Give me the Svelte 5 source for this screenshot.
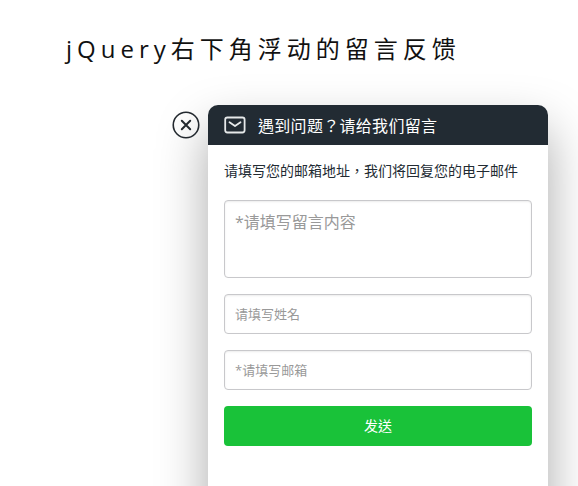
<script>
    let message = "";
    let name = "";
    let email = "";
</script>

<div class="page">
    <h1 class="title">jQuery右下角浮动的留言反馈</h1>

    <section class="panel">
        <button class="close" aria-label="关闭">
            <svg width="28" height="28" viewBox="0 0 28 28" fill="none" stroke="#23292f">
                <circle cx="14" cy="14" r="12.75" stroke-width="1.6" />
                <path d="M9.8 9.8 18.2 18.2M18.2 9.8 9.8 18.2" stroke-width="2" stroke-linecap="round" />
            </svg>
        </button>

        <header class="panel-head">
            <svg width="22" height="18" viewBox="0 0 22 18" fill="none" stroke="#e6e9ea" stroke-width="1.8">
                <rect x="1.2" y="1.5" width="19.4" height="15" rx="2.2" />
                <path d="M5.5 6.2 11 10 16.5 6.2" stroke-linecap="round" stroke-linejoin="round" />
            </svg>
            <span>遇到问题？请给我们留言</span>
        </header>

        <form class="panel-body" on:submit|preventDefault>
            <p class="hint">请填写您的邮箱地址，我们将回复您的电子邮件</p>
            <textarea class="field area" placeholder="*请填写留言内容" bind:value={message}></textarea>
            <input class="field" placeholder="请填写姓名" bind:value={name} />
            <input class="field" placeholder="*请填写邮箱" bind:value={email} />
            <button class="send" type="submit">发送</button>
        </form>
    </section>
</div>

<style>
    :global(body) {
        margin: 0;
        background: #fff;
        overflow: hidden;
        font-family: "Open Sans", "Noto Sans CJK TC", sans-serif;
    }

    .page {
        height: 486px;
        overflow: hidden;
        padding-left: 66px;
        box-sizing: border-box;
    }

    .title {
        margin: 0;
        padding-top: 33px;
        height: 105px;
        box-sizing: border-box;
        font-size: 24px;
        line-height: 32px;
        font-weight: 400;
        letter-spacing: 5px;
        color: #111;
    }

    .panel {
        position: relative;
        width: 340px;
        height: 420px;
        margin-left: 142px;
        border-radius: 10px 10px 0 0;
        background: #fff;
        box-shadow: 0 24px 50px rgba(0, 0, 0, 0.34);
    }

    .close {
        position: absolute;
        left: -36px;
        top: 6px;
        width: 28px;
        height: 28px;
        padding: 0;
        border: 0;
        background: none;
        display: block;
    }

    .close svg {
        display: block;
    }

    .panel-head {
        height: 40px;
        padding-left: 16px;
        display: flex;
        align-items: center;
        gap: 12px;
        border-radius: 10px 10px 0 0;
        background: #222b33;
        color: #fff;
        font-size: 16px;
        letter-spacing: 0.3px;
    }

    .panel-body {
        display: flex;
        flex-direction: column;
        gap: 16px;
        padding: 0 16px;
    }

    .hint {
        margin: 0;
        padding-top: 17px;
        height: 39px;
        box-sizing: border-box;
        font-size: 14px;
        line-height: 18px;
        color: #222b33;
    }

    .field {
        display: block;
        width: 100%;
        height: 40px;
        box-sizing: border-box;
        padding: 0 10px;
        border: 1px solid #c8c8cb;
        border-radius: 4px;
        background: #fff;
        box-shadow: inset 0 1px 2px rgba(0, 0, 0, 0.08);
        font: 13px "Open Sans", "Noto Sans CJK TC", sans-serif;
        color: #333;
        outline: none;
    }

    .field::placeholder {
        color: #999;
        opacity: 1;
    }

    .area {
        height: 78px;
        padding: 10px;
        font-size: 16px;
        line-height: 22px;
        resize: none;
    }

    .send {
        height: 40px;
        padding: 0 0 2px;
        border: 0;
        border-radius: 4px;
        background: #19c239;
        color: #fff;
        font: 14px "Open Sans", "Noto Sans CJK TC", sans-serif;
    }
</style>
